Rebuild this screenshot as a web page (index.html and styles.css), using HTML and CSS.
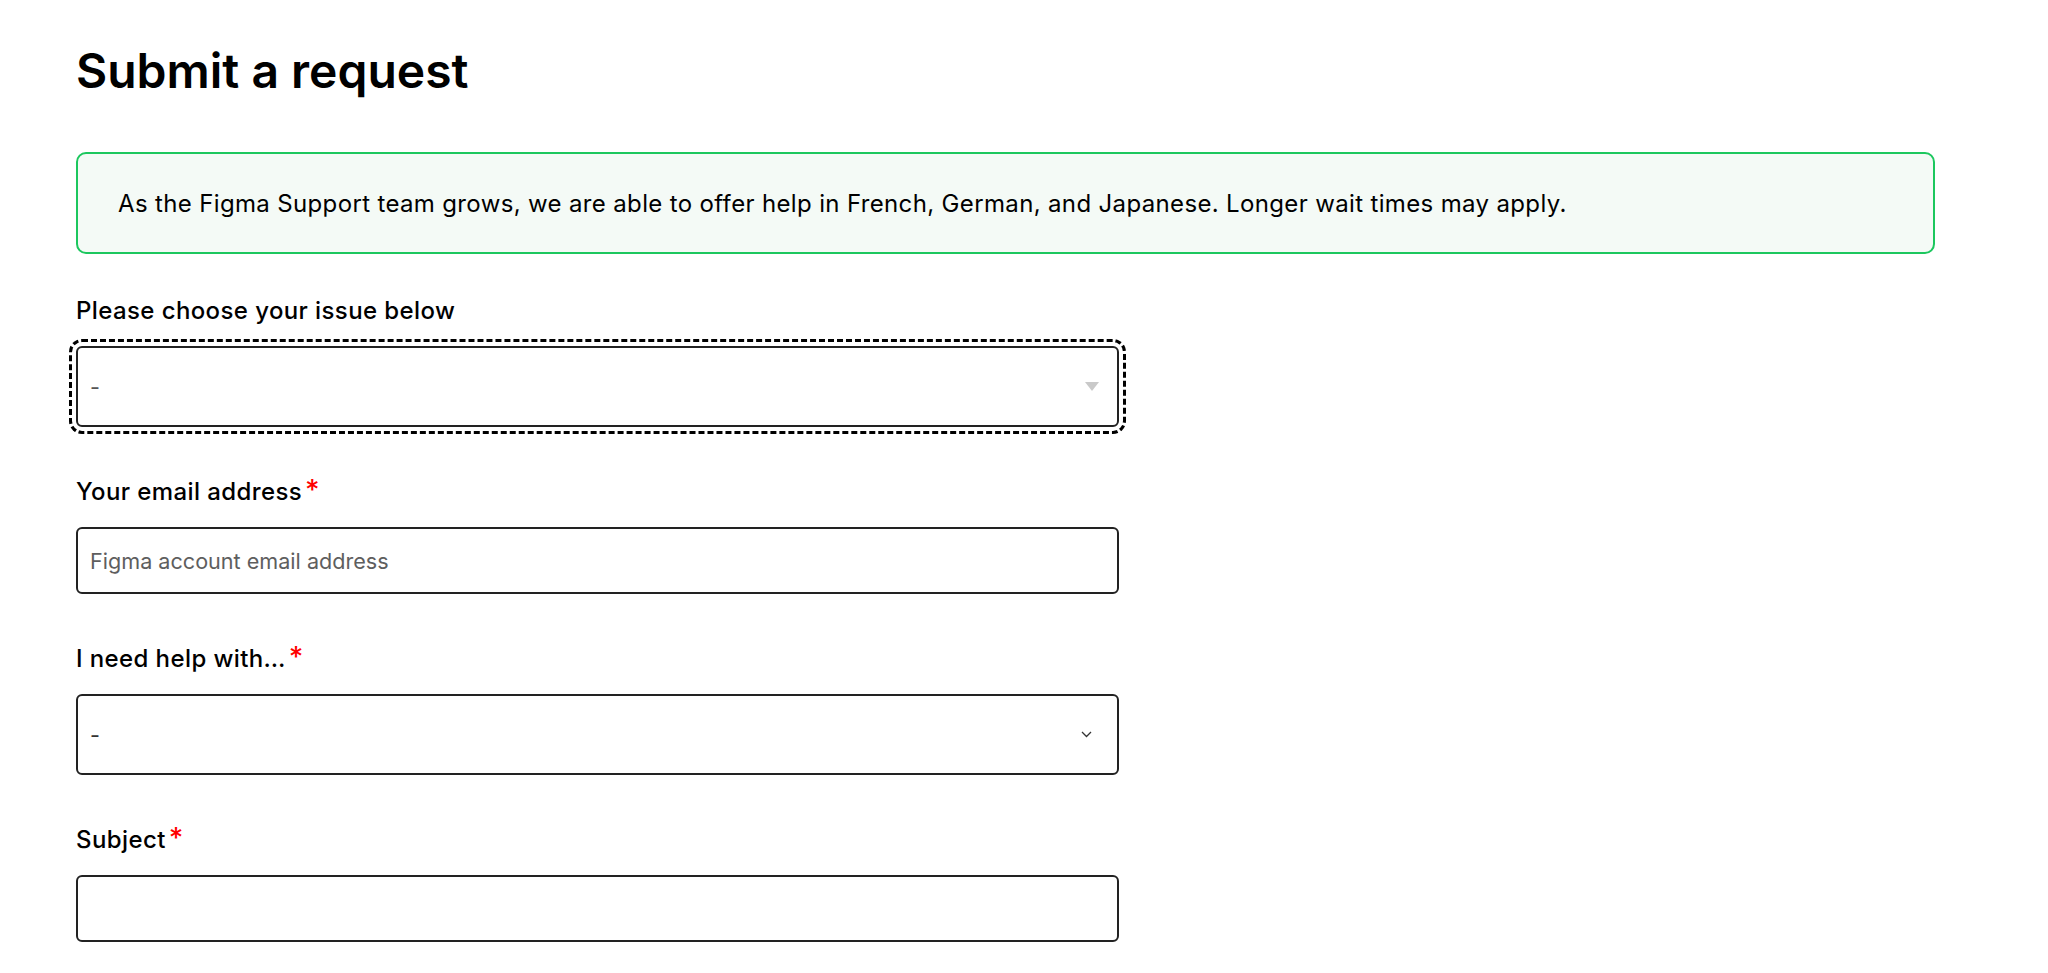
FILE: index.html
```html
<!DOCTYPE html>
<html>
<head>
	<meta charset="utf-8">
	<title>Submit a request</title>
	<link rel="stylesheet" href="styles.css">
</head>
<body>
	<main class="page">
		<h1 class="page-title">Submit a request</h1>
		<div class="notice">
			<p>As the Figma Support team grows, we are able to offer help in French, German, and Japanese. Longer wait times may apply.</p>
		</div>
		<form class="request-form">
			<div class="field">
				<label for="issue">Please choose your issue below</label>
				<div class="select-wrap select-wrap--focused">
					<select id="issue" class="control control--tall control--muted">
						<option>-</option>
					</select>
					<svg class="select-arrow" width="14" height="9" viewBox="0 0 14 9"><path d="M0 0h14L7 9z" fill="#c9c9c9"/></svg>
				</div>
			</div>
			<div class="field">
				<label for="email">Your email address<span class="required">*</span></label>
				<input id="email" class="control" type="email" placeholder="Figma account email address">
			</div>
			<div class="field">
				<label for="help">I need help with…<span class="required">*</span></label>
				<div class="select-wrap">
					<select id="help" class="control control--tall">
						<option>-</option>
					</select>
					<svg class="select-chevron" width="11" height="7" viewBox="0 0 11 7"><path d="M1 1l4.5 4.5L10 1" fill="none" stroke="#333" stroke-width="1.3"/></svg>
				</div>
			</div>
			<div class="field">
				<label for="subject">Subject<span class="required">*</span></label>
				<input id="subject" class="control" type="text">
			</div>
		</form>
	</main>
</body>
</html>
```

FILE: styles.css
```css
html {
	font-family: Inter, "Liberation Sans", sans-serif;
	color: #000;
	background: #fff;
}

body {
	margin: 0;
}

.page {
	padding: 41px 113px 0 76px;
}

.page-title {
	margin: 0;
	font-size: 48px;
	line-height: 60px;
	font-weight: 600;
}

.notice {
	margin-top: 51px;
	border: 2px solid #1cc75e;
	border-radius: 10px;
	background: #f4faf6;
	padding: 34px 40px 32px;
}

.notice p {
	margin: 0;
	font-size: 24px;
	line-height: 32px;
	letter-spacing: 0.35px;
}

.request-form {
	margin-top: 43px;
}

.field {
	width: 1043px;
	margin-bottom: 51px;
}

.field label {
	display: block;
	font-size: 24px;
	line-height: 28px;
	font-weight: 500;
	letter-spacing: 0.4px;
	margin-bottom: 21px;
}

.required {
	color: #f00;
	font-size: 28px;
	line-height: 0;
	margin-left: 3px;
}

.control {
	display: block;
	box-sizing: border-box;
	width: 100%;
	height: 67px;
	margin: 0;
	padding: 0 12px;
	border: 2px solid #222;
	border-radius: 6px;
	background: #fff;
	font: 400 21.6px Inter, "Liberation Sans", sans-serif;
	color: #333;
	appearance: none;
}

.control::placeholder {
	color: #5e5e5e;
}

.control--tall {
	height: 81px;
}

.control--muted {
	color: #555;
}

.select-wrap {
	position: relative;
}

.select-wrap--focused .control {
	outline: 3px dashed #000;
	outline-offset: 4px;
}

.select-arrow {
	position: absolute;
	right: 20px;
	top: 36px;
	pointer-events: none;
}

.select-chevron {
	position: absolute;
	right: 27px;
	top: 37px;
	pointer-events: none;
}
```
